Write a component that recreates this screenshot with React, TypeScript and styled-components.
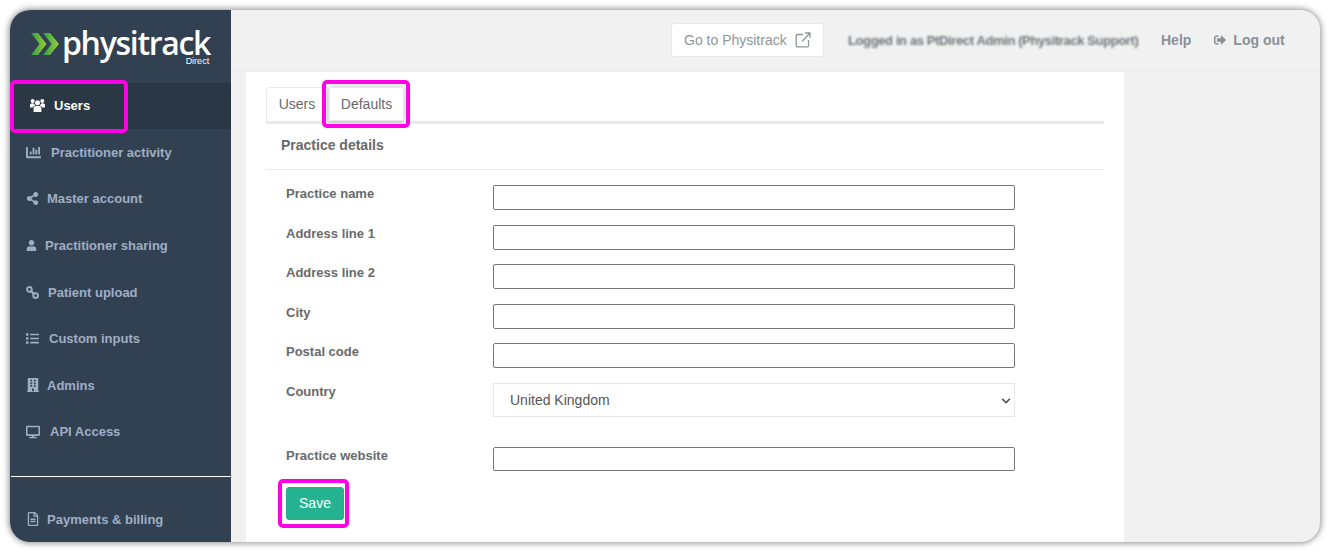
import React from "react";
import styled, { createGlobalStyle } from "styled-components";
import { FaChartBar, FaShareAlt, FaUser, FaList, FaBuilding, FaDesktop, FaRegFileAlt, FaSignOutAlt, FaChevronDown } from "react-icons/fa";

const Global = createGlobalStyle`
  html, body { margin: 0; padding: 0; background: #fff; height: 552px; overflow: hidden; }
  * { box-sizing: border-box; }
  body { font-family: "Liberation Sans", Arial, sans-serif; color: #676a6c; }
`;

const Page = styled.div`
  padding: 10px;
  width: 1330px;
  height: 552px;
`;
const Win = styled.div`
  position: relative;
  display: flex;
  width: 1310px;
  height: 532px;
  border-radius: 20px;
  overflow: hidden;
  background: #f1f1f1;
  box-shadow: 0 0 6px 1px rgba(0, 0, 0, 0.45);
`;
const Frame = styled.div`
  position: relative;
`;
const Side = styled.aside`
  width: 221px;
  flex: none;
  background: #324152;
  display: flex;
  flex-direction: column;
`;
const LogoBox = styled.div`
  height: 73px;
  flex: none;
  display: flex;
  padding: 18px 0 0 21px;
  gap: 2px;
  color: #fff;
`;
const LogoText = styled.div`
  display: flex;
  flex-direction: column;
  align-items: flex-end;
  font-family: "Open Sans", sans-serif;
  font-size: 32px;
  font-weight: 600;
  line-height: 29px;
  letter-spacing: -1.3px;
  span { display: block; }
`;
const LogoSub = styled.span`
  font-size: 9px;
  font-weight: 400;
  line-height: 9px;
  letter-spacing: 0;
  margin-right: 1px;
  font-family: "Liberation Sans", sans-serif;
`;
const Nav = styled.nav`
  display: flex;
  flex-direction: column;
`;
const Item = styled.a<{ $active?: boolean; $gap?: number }>`
  display: flex;
  align-items: center;
  height: ${(p) => (p.$active ? 46 : 46.6)}px;
  padding-left: ${(p) => (p.$active ? 19 : 16)}px;
  padding-bottom: ${(p) => (p.$active ? 2 : 0)}px;
  gap: ${(p) => p.$gap ?? 8}px;
  font-size: 13px;
  font-weight: 700;
  color: ${(p) => (p.$active ? "#fff" : "#a0aec4")};
  background: ${(p) => (p.$active ? "#2a3744" : "transparent")};
  border-left: ${(p) => (p.$active ? "1px solid #1ab394" : "none")};
  svg { flex: none; }
`;
const Rule = styled.div`
  height: 1px;
  margin: 21px 0 19px 1px;
  background: #fff;
`;
const Main = styled.main`
  flex: 1;
  display: flex;
  flex-direction: column;
  min-width: 0;
`;
const Top = styled.header`
  height: 61px;
  flex: none;
  display: flex;
  align-items: center;
  padding: 0 0 0 440px;
  border-bottom: 1px solid #e7eaec;
  background: #f1f1f1;
  font-size: 14px;
`;
const GoBtn = styled.a`
  display: flex;
  align-items: center;
  gap: 8px;
  width: 153px;
  height: 34px;
  flex: none;
  padding-left: 12px;
  background: #fff;
  border: 1px solid #e7e7e7;
  border-radius: 3px;
  color: #8f959a;
  font-size: 14px;
`;
const Blurred = styled.span`
  margin-left: 24px;
  width: 290px;
  flex: none;
  font-weight: 700;
  font-size: 13px;
  letter-spacing: -0.38px;
  color: #6f7378;
  white-space: nowrap;
  filter: blur(1.3px);
`;
const TopLink = styled.a`
  display: flex;
  align-items: center;
  flex: none;
  gap: 7px;
  margin-left: 23px;
  font-weight: 700;
  color: #8b9095;
  white-space: nowrap;
`;
const Body = styled.div`
  flex: 1;
  padding-left: 15px;
  min-height: 0;
`;
const Card = styled.section`
  position: relative;
  width: 878px;
  height: 100%;
  margin-top: 1px;
  background: #fff;
  padding: 15px 20px 0;
`;
const Tabs = styled.div`
  display: flex;
  gap: 1px;
  height: 37px;
  border-bottom: 3px solid #e7eaec;
`;
const Tab = styled.a<{ $on?: boolean }>`
  display: flex;
  align-items: center;
  justify-content: center;
  height: 34px;
  width: ${(p) => (p.$on ? 75 : 62)}px;
  padding-bottom: ${(p) => (p.$on ? 0 : 2)}px;
  font-size: 14px;
  color: #676a6c;
  border: 1px solid #e7eaec;
  border-bottom: ${(p) => (p.$on ? "1px solid #e7eaec" : "none")};
  border-radius: 3px 3px 0 0;
  ${(p) => p.$on && "box-shadow: 0 0 4px rgba(0,0,0,.3); border-radius: 2px;"}
`;
const Heading = styled.div`
  height: 46px;
  display: flex;
  align-items: center;
  padding: 0 15px 4px;
  font-size: 14px;
  font-weight: 700;
  border-bottom: 1px solid #e7eaec;
`;
const Form = styled.form`
  padding: 15px 0 0 20px;
  display: flex;
  flex-direction: column;
`;
const Row = styled.div<{ $h?: number }>`
  display: flex;
  height: ${(p) => p.$h ?? 39.5}px;
`;
const Label = styled.label`
  width: 207px;
  flex: none;
  font-size: 13px;
  line-height: 15px;
  font-weight: 700;
  padding-top: 1px;
`;
const Input = styled.input<{ $h?: number }>`
  width: 522px;
  height: ${(p) => p.$h ?? 25}px;
  margin: 0;
  padding: 0 4px;
  background: #fff;
  border: 1px solid #767676;
  border-radius: 2px;
`;
const SelectBox = styled.div`
  position: relative;
  width: 522px;
  height: 34px;
  display: flex;
  align-items: center;
  padding-left: 16px;
  border: 1px solid #e5e6e7;
  font-size: 14px;
  color: #555;
  svg { position: absolute; right: 3px; top: 12px; }
`;
const SaveBtn = styled.button`
  display: block;
  width: 58px;
  height: 33px;
  padding: 0;
  margin: 0;
  background: #25b291;
  border: 1px solid #1ab394;
  border-radius: 3px;
  color: #fff;
  font: 14px "Liberation Sans", Arial, sans-serif;
`;
const Highlight = styled.div<{ $x: number; $y: number; $w: number; $h: number }>`
  position: absolute;
  left: ${(p) => p.$x}px;
  top: ${(p) => p.$y}px;
  width: ${(p) => p.$w}px;
  height: ${(p) => p.$h}px;
  border: 4px solid #ff00e6;
  border-radius: 5px;
  pointer-events: none;
`;

const Logo = () => (
  <svg width="30" height="24" viewBox="0 0 30 24" style={{ marginTop: 4, marginLeft: -1 }}>
    <defs>
      <linearGradient id="lg" x1="0" x2="1" y1="0" y2="0">
        <stop offset="0" stopColor="#2f9a46" />
        <stop offset="1" stopColor="#9ad137" />
      </linearGradient>
    </defs>
    <path d="M1 1h7l8.5 11L8 23H1l8.500-11z" fill="url(#lg)" />
    <path d="M13 1h7l9 11-9 11h-7l8.500-11z" fill="url(#lg)" />
  </svg>
);
const UsersIcon = () => (
  <svg width="15" height="15" viewBox="0 0 15 15" fill="#fff">
    <circle cx="7.500" cy="4.800" r="2.500" />
    <circle cx="2.700" cy="3" r="2" />
    <circle cx="12.300" cy="3" r="2" />
    <path d="M3.600 14V10.200C3.600 8.400 5 7.700 7.500 7.700s3.900.7 3.900 2.500V14z" />
    <path d="M0 9.500V7c0-1 .8-1.700 2.500-1.700.8 0 1.300.2 1.700.5.300 1 .8 1.500 1 1.700C3.600 8 2.900 8.700 2.800 9.500zM15 9.500V7c0-1-.8-1.700-2.500-1.700-.8 0-1.300.2-1.700.5-.3 1-.8 1.500-1 1.700 1.600.5 2.300 1.200 2.400 2z" />
  </svg>
);
const LinkIcon = () => (
  <svg width="13" height="13" viewBox="0 0 13 13" fill="none" stroke="#a0aec4" strokeWidth="1.900">
    <circle cx="3.400" cy="3.400" r="2.400" />
    <circle cx="9.600" cy="9.600" r="2.400" />
    <path d="M5 5l3 3" />
  </svg>
);
const ExtIcon = () => (
  <svg width="16" height="16" viewBox="0 0 16 16" fill="none" stroke="#8f959a" strokeWidth="1.300">
    <path d="M8 2.500H2.200a1 1 0 0 0-1 1v10.300a1 1 0 0 0 1 1h10.300a1 1 0 0 0 1-1V8" />
    <path d="M7 9.500L15 1M10 1h5v5" />
  </svg>
);

const items: [string, React.ReactNode, number][] = [
  ["Practitioner activity", <FaChartBar size={15} />, 10],
  ["Master account", <FaShareAlt size={13} />, 8],
  ["Practitioner sharing", <FaUser size={11} />, 8],
  ["Patient upload", <LinkIcon />, 9],
  ["Custom inputs", <FaList size={13} />, 10],
  ["Admins", <FaBuilding size={14} />, 7],
  ["API Access", <FaDesktop size={14} />, 10],
];
const fields = ["Practice name", "Address line 1", "Address line 2", "City", "Postal code"];

export default function App() {
  return (
    <Page>
      <Global />
      <Frame>
        <Win>
          <Side>
            <LogoBox>
              <Logo />
              <LogoText>
                <span>physitrack</span>
                <LogoSub>Direct</LogoSub>
              </LogoText>
            </LogoBox>
            <Nav>
              <Item $active $gap={9}><UsersIcon />Users</Item>
              {items.map(([t, ic, g]) => (
                <Item key={t} $gap={g}>{ic}{t}</Item>
              ))}
              <Rule />
              <Item $gap={7}><FaRegFileAlt size={14} />Payments &amp; billing</Item>
            </Nav>
          </Side>
          <Main>
            <Top>
              <GoBtn>Go to Physitrack <ExtIcon /></GoBtn>
              <Blurred>Logged in as PtDirect Admin (Physitrack Support)</Blurred>
              <TopLink>Help</TopLink>
              <TopLink><FaSignOutAlt size={12} />Log out</TopLink>
            </Top>
            <Body>
              <Card>
                <Tabs>
                  <Tab>Users</Tab>
                  <Tab $on>Defaults</Tab>
                </Tabs>
                <Heading>Practice details</Heading>
                <Form>
                  {fields.map((f) => (
                    <Row key={f}><Label>{f}</Label><Input /></Row>
                  ))}
                  <Row $h={64}>
                    <Label>Country</Label>
                    <SelectBox>United Kingdom<FaChevronDown size={10} color="#555" /></SelectBox>
                  </Row>
                  <Row $h={40}><Label>Practice website</Label><Input $h={24} /></Row>
                  <SaveBtn type="button">Save</SaveBtn>
                </Form>
              </Card>
            </Body>
          </Main>
        </Win>
        <Highlight $x={0} $y={70} $w={118} $h={53} />
        <Highlight $x={312} $y={70} $w={88} $h={48} />
        <Highlight $x={268} $y={469} $w={71} $h={49} />
      </Frame>
    </Page>
  );
}
